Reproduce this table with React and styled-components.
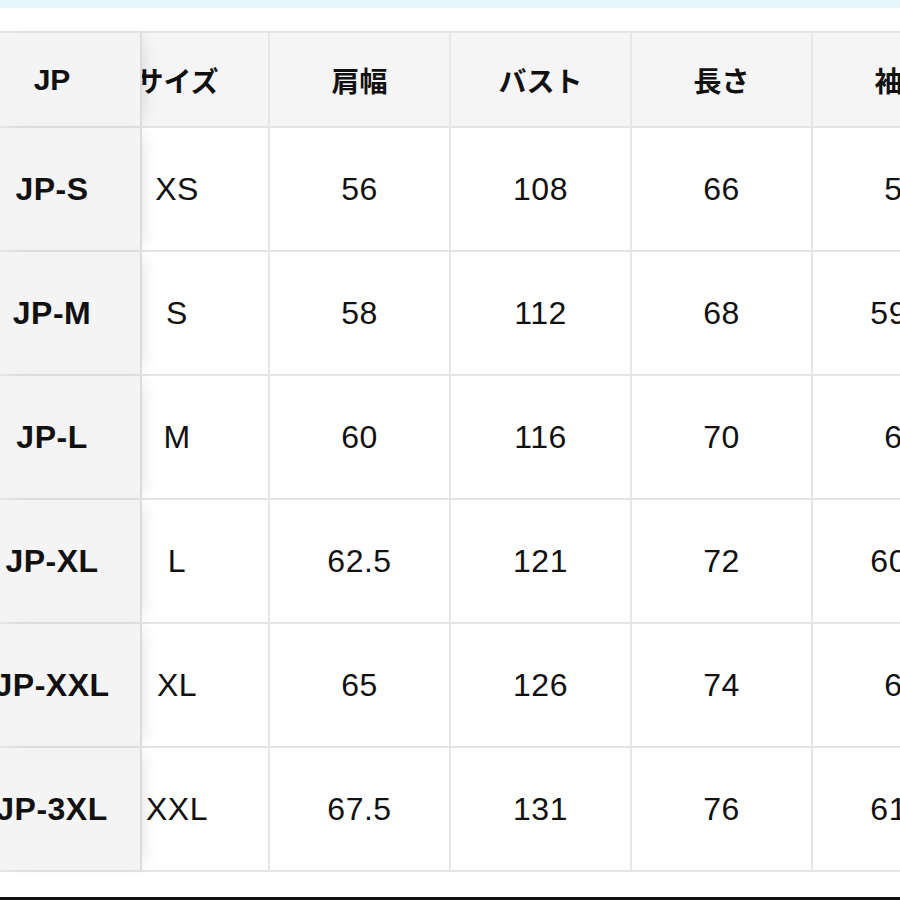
import React from "react";
import styled, { createGlobalStyle } from "styled-components";

const Global = createGlobalStyle`
  html, body { margin: 0; padding: 0; background: #ffffff; }
  body { font-family: "Liberation Sans", "Noto Sans CJK JP", sans-serif; color: #111; }
`;

const Page = styled.div`
  width: 900px;
  height: 900px;
  overflow: hidden;
  display: flex;
  flex-direction: column;
  background: #fff;
`;

const TopStrip = styled.div`
  height: 8px;
  background: #e6f4fc;
  flex: none;
`;

const Spacer = styled.div`
  height: ${(p) => p.$h}px;
  flex: none;
`;

const Table = styled.div`
  border-top: 2px solid #e4e4e4;
  display: flex;
  flex-direction: column;
  flex: none;
`;

const Row = styled.div`
  display: grid;
  grid-template-columns: 142px 128px 181px 181px 181px 181px;
  height: ${(p) => (p.$header ? 95 : 124)}px;
  box-sizing: border-box;
  border-bottom: 2px solid #e4e4e4;
  background: ${(p) => (p.$header ? "#f5f5f5" : "#ffffff")};
`;

const Cell = styled.div`
  display: flex;
  align-items: center;
  justify-content: center;
  box-sizing: border-box;
  border-right: 2px solid #e6e6e6;
  overflow: hidden;
  white-space: nowrap;
  font-size: ${(p) => (p.$header ? 28 : 32)}px;
  font-weight: ${(p) => (p.$header ? 700 : 400)};
  letter-spacing: ${(p) => (p.$header ? 0 : 0.5)}px;
  padding-right: ${(p) => p.$shift || 0}px;
`;

const StickyCell = styled(Cell)`
  position: relative;
  z-index: 1;
  background: #f4f4f4;
  border-right: 2px solid #dcdcdc;
  font-weight: 700;
  font-size: ${(p) => (p.$header ? 30 : 32)}px;
  padding-right: 36px;
  box-shadow: 8px 0 14px -6px rgba(0, 0, 0, 0.1);
`;

const BottomLine = styled.div`
  height: 3px;
  background: #111;
  flex: none;
`;

const headers = ["JP", "サイズ", "肩幅", "バスト", "長さ", "袖丈"];
const rows = [
  ["JP-S", "XS", "56", "108", "66", "58"],
  ["JP-M", "S", "58", "112", "68", "59.5"],
  ["JP-L", "M", "60", "116", "70", "60"],
  ["JP-XL", "L", "62.5", "121", "72", "60.5"],
  ["JP-XXL", "XL", "65", "126", "74", "61"],
  ["JP-3XL", "XXL", "67.5", "131", "76", "61.5"],
];

export default function App() {
  return (
    <Page>
      <Global />
      <TopStrip />
      <Spacer $h={23} />
      <Table>
        <Row $header>
          <StickyCell $header>{headers[0]}</StickyCell>
          <Cell $header $shift={56}>{headers[1]}</Cell>
          {headers.slice(2).map((h) => (
            <Cell $header key={h}>{h}</Cell>
          ))}
        </Row>
        {rows.map((r) => (
          <Row key={r[0]}>
            <StickyCell>{r[0]}</StickyCell>
            <Cell $shift={56}>{r[1]}</Cell>
            {r.slice(2).map((v, i) => (
              <Cell key={i}>{v}</Cell>
            ))}
          </Row>
        ))}
      </Table>
      <Spacer $h={25} />
      <BottomLine />
    </Page>
  );
}
